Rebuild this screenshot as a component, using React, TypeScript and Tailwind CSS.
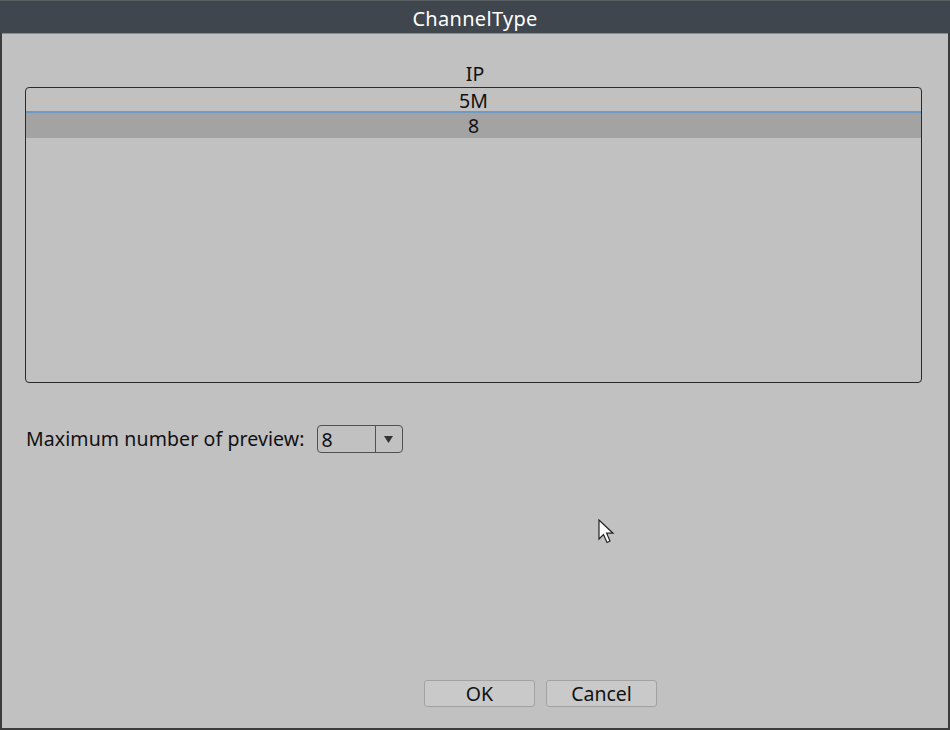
import React from "react";

const font = { fontFamily: '"Noto Sans", "Open Sans", sans-serif' };

function Cursor() {
  return (
    <svg width="18" height="26" viewBox="0 0 18 26" className="absolute left-[598px] top-[519px]">
      <path d="M1 1 L1 20 L5.5 15.5 L9 23.5 L12 22 L8.6 14.2 L15 14.2 Z" fill="#ffffff" stroke="#222" strokeWidth="1.2" strokeLinejoin="miter" />
    </svg>
  );
}

export default function App() {
  return (
    <div className="relative w-[950px] h-[730px] bg-[#3c3c3c] flex flex-col" style={font}>
      <div className="h-[33px] bg-[#3f464d] border-t border-[#5a5f64] flex items-center justify-center shrink-0">
        <span className="text-white text-[20px] leading-none tracking-[0.3px] mt-[4px]">ChannelType</span>
      </div>
      <div className="flex-1 mx-[2px] mb-[2px] bg-[#c1c1c1] border-t border-[#8a8a8a] flex flex-col">
        <div className="h-[27px] mt-[26px] text-center text-[19.5px] leading-[27px] text-[#111]">IP</div>
        <div className="ml-[23px] mr-[26px] h-[296px] border border-[#2a2a2a] rounded-[4px] overflow-hidden flex flex-col">
          <div className="h-[23px] relative text-center text-[19.5px] leading-[25px] text-[#111]">
            <div className="absolute left-0 right-0 top-[12px] h-px bg-[#c9bfb6]" />
            <span className="relative">5M</span>
          </div>
          <div className="h-[2px] bg-[#6f9ac2]" />
          <div className="h-[25px] bg-[#a3a3a3] text-center text-[19.5px] leading-[26px] text-[#111]">8</div>
        </div>
        <div className="flex items-center mt-[42px] ml-[24px]">
          <span className="text-[19.5px] leading-none tracking-[0.1px] text-[#111]">Maximum number of preview:</span>
          <div className="ml-[12px] w-[86px] h-[28px] border border-[#505050] rounded-[4px] flex">
            <div className="flex-1 pl-[4px] text-[19.5px] leading-[27px] text-[#111]">8</div>
            <div className="w-[27px] border-l border-[#505050] flex items-center justify-center">
              <svg width="9" height="7" viewBox="0 0 9 7"><path d="M0 0 H9 L4.5 7 Z" fill="#333" /></svg>
            </div>
          </div>
        </div>
        <div className="flex-1" />
        <div className="flex gap-[11px] mb-[21px] pl-[422px]">
          <button className="w-[111px] h-[27px] bg-[#c9c9c9] border border-[#a2a2a2] rounded-[3px] text-[19.5px] leading-none text-[#111]">OK</button>
          <button className="w-[111px] h-[27px] bg-[#c9c9c9] border border-[#a2a2a2] rounded-[3px] text-[19.5px] leading-none text-[#111]">Cancel</button>
        </div>
      </div>
      <Cursor />
    </div>
  );
}
